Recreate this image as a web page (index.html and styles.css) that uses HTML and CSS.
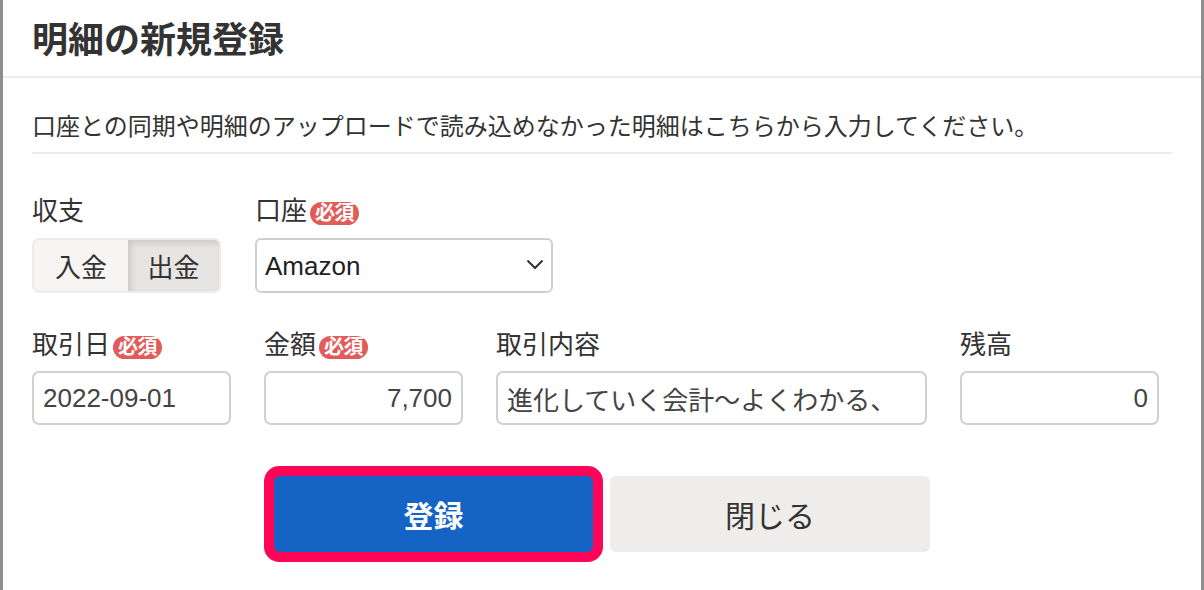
FILE: index.html
```html
<!DOCTYPE html>
<html lang="ja">
<head>
<meta charset="utf-8">
<title>明細の新規登録</title>
<link rel="stylesheet" href="styles.css">
</head>
<body>
<div class="modal">
  <div class="modal-header">
    <h1 class="modal-title">明細の新規登録</h1>
  </div>
  <div class="modal-body">
    <p class="desc">口座との同期や明細のアップロードで読み込めなかった明細はこちらから入力してください。</p>

    <div class="row row-1">
      <div class="field field-toggle">
        <div class="label">収支</div>
        <div class="toggle">
          <span class="seg">入金</span>
          <span class="seg seg-active">出金</span>
        </div>
      </div>
      <div class="field field-select">
        <div class="label">口座<span class="badge">必須</span></div>
        <div class="select">
          <span class="select-text">Amazon</span>
          <svg class="chev" width="18" height="11" viewBox="0 0 18 11"><polyline points="1.5,1.5 9,9 16.5,1.5" fill="none" stroke="#333" stroke-width="2"/></svg>
        </div>
      </div>
    </div>

    <div class="row row-2">
      <div class="field field-w">
        <div class="label">取引日<span class="badge">必須</span></div>
        <div class="input">2022-09-01</div>
      </div>
      <div class="field field-w">
        <div class="label">金額<span class="badge">必須</span></div>
        <div class="input input-right">7,700</div>
      </div>
      <div class="field field-wide">
        <div class="label">取引内容</div>
        <div class="input">進化していく会計〜よくわかる、</div>
      </div>
      <div class="field field-w">
        <div class="label">残高</div>
        <div class="input input-right">0</div>
      </div>
    </div>

    <div class="actions">
      <button class="btn btn-primary">登録</button>
      <button class="btn btn-secondary">閉じる</button>
    </div>
  </div>
</div>
</body>
</html>
```
FILE: styles.css
```css
html, body {
  margin: 0;
  padding: 0;
}
body {
  width: 1204px;
  height: 590px;
  overflow: hidden;
  background: #8e8e8e;
  font-family: "Liberation Sans", "Noto Sans CJK JP", sans-serif;
  color: #333;
}
.modal {
  margin-left: 3px;
  width: 1198px;
  height: 590px;
  background: #fff;
  box-sizing: border-box;
}
.modal-header {
  height: 78px;
  box-sizing: border-box;
  padding: 6px 29px 0;
  display: flex;
  align-items: center;
  border-bottom: 2px solid #ececec;
}
.modal-title {
  margin: 0;
  font-size: 36px;
  font-weight: 700;
  color: #333;
  line-height: 40px;
}
.modal-body {
  padding: 0 29px;
}
.desc {
  margin: 31px 0 0;
  font-size: 24px;
  line-height: 36px;
  padding-bottom: 7px;
  border-bottom: 2px solid #ececec;
  color: #333;
}
.row {
  display: flex;
}
.row-1 {
  margin-top: 39px;
  gap: 34px;
}
.row-2 {
  margin-top: 34px;
  gap: 33px;
}
.field {
  display: flex;
  flex-direction: column;
}
.label {
  font-size: 26px;
  line-height: 36px;
  color: #333;
  display: flex;
  align-items: center;
}
.badge {
  display: inline-block;
  margin-left: 3px;
  margin-top: 4px;
  height: 23px;
  line-height: 23px;
  padding: 0 5px;
  border-radius: 12px;
  background: #e35b59;
  color: #fff;
  font-size: 20px;
  font-weight: 700;
  letter-spacing: -0.5px;
}
.row-1 .label {
  margin-bottom: 9px;
}
.row-2 .label {
  margin-bottom: 8px;
}
.field-toggle {
  width: 189px;
}
.toggle {
  display: flex;
  height: 55px;
  box-sizing: border-box;
  border: 2px solid #ececea;
  border-radius: 7px;
  background: #f6f5f3;
  overflow: hidden;
}
.seg {
  display: flex;
  align-items: center;
  justify-content: center;
  font-size: 26px;
  color: #333;
}
.seg:first-child {
  width: 94px;
}
.seg-active {
  flex: 1;
  background: #e6e5e3;
  box-shadow: inset 3px 3px 6px rgba(0, 0, 0, 0.12);
}
.field-select {
  width: 298px;
}
.select {
  height: 55px;
  box-sizing: border-box;
  border: 2px solid #cfcfcf;
  border-radius: 6px;
  display: flex;
  align-items: center;
  justify-content: space-between;
  padding: 2px 7px 0 8px;
}
.select-text {
  font-size: 26px;
  color: #222;
}
.chev {
  margin-top: -4px;
}
.field-w {
  width: 199px;
}
.field-wide {
  width: 431px;
}
.input {
  height: 54px;
  box-sizing: border-box;
  border: 2px solid #d0d0d0;
  border-radius: 7px;
  display: flex;
  align-items: center;
  padding: 0 9px;
  font-size: 26px;
  color: #444;
  white-space: nowrap;
  overflow: hidden;
}
.input-right {
  justify-content: flex-end;
}
.actions {
  margin-top: 51px;
  display: flex;
  justify-content: center;
  gap: 17px;
}
.btn {
  height: 76px;
  border: none;
  border-radius: 6px;
  font-family: "Liberation Sans", "Noto Sans CJK JP", sans-serif;
  font-size: 30px;
  padding: 0;
  cursor: pointer;
}
.btn-primary {
  width: 319px;
  background: #1563c5;
  color: #fff;
  font-weight: 700;
  box-shadow: 0 0 0 10px #ff0557;
}
.btn-secondary {
  width: 320px;
  background: #eeedeb;
  color: #333;
}
```
